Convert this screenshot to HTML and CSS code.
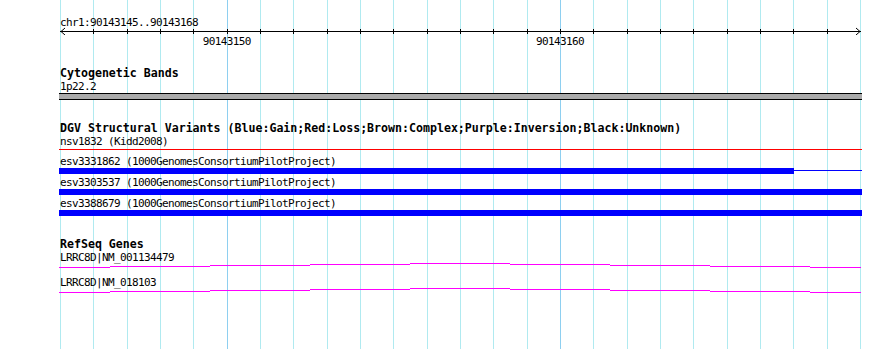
FILE: index.html
```html
<!DOCTYPE html>
<html>
<head>
  <title>Genome view</title>
  <link rel="stylesheet" href="styles.css">
</head>
<body>

  <div class="view">

    <!-- grid behind the tracks: one column per base -->
    <div class="grid">
      <div class="grid-col"></div><div class="grid-col"></div><div class="grid-col"></div>
      <div class="grid-col"></div><div class="grid-col"></div><div class="grid-col major"></div>
      <div class="grid-col"></div><div class="grid-col"></div><div class="grid-col"></div>
      <div class="grid-col"></div><div class="grid-col"></div><div class="grid-col"></div>
      <div class="grid-col"></div><div class="grid-col"></div><div class="grid-col"></div>
      <div class="grid-col major"></div><div class="grid-col"></div><div class="grid-col"></div>
      <div class="grid-col"></div><div class="grid-col"></div><div class="grid-col"></div>
      <div class="grid-col"></div><div class="grid-col"></div><div class="grid-col"></div>
    </div>

    <div class="tracks">

      <div class="label">chr1:90143145..90143168</div>
      <svg class="ruler" width="803" height="8" viewBox="0 0 803 8" shape-rendering="crispEdges">
        <line x1="1" y1="4.5" x2="802" y2="4.5" stroke="#000"/>
        <g id="ticks" stroke="#000"></g>
        <polyline points="6,1 2,4.5 6,8" fill="none" stroke="#000" shape-rendering="auto"/>
        <polyline points="797,1 801,4.5 797,8" fill="none" stroke="#000" shape-rendering="auto"/>
      </svg>
      <div class="tick-labels">
        <span class="tick-label" style="left: 167.67px">90143150</span>
        <span class="tick-label" style="left: 501px">90143160</span>
      </div>

      <div class="title section-gap">Cytogenetic Bands</div>
      <div class="label">1p22.2</div>
      <div class="band"></div>

      <div class="title section-gap-lg">DGV Structural Variants (Blue:Gain;Red:Loss;Brown:Complex;Purple:Inversion;Black:Unknown)</div>
      <div class="label">nsv1832 (Kidd2008)</div>
      <div class="rule-red"></div>

      <div class="feature first">
        <div class="label">esv3331862 (1000GenomesConsortiumPilotProject)</div>
        <div class="bar-wrap">
          <div class="bar" style="width: 735px"></div>
          <div class="bar-tail"></div>
        </div>
      </div>
      <div class="feature">
        <div class="label">esv3303537 (1000GenomesConsortiumPilotProject)</div>
        <div class="bar"></div>
      </div>
      <div class="feature">
        <div class="label">esv3388679 (1000GenomesConsortiumPilotProject)</div>
        <div class="bar"></div>
      </div>

      <div class="title section-gap-lg">RefSeq Genes</div>
      <div class="gene">
        <div class="label">LRRC8D|NM_001134479</div>
        <svg class="gene-line" width="803" height="5" viewBox="0 0 803 5"></svg>
      </div>
      <div class="gene second">
        <div class="label">LRRC8D|NM_018103</div>
        <svg class="gene-line" width="803" height="5" viewBox="0 0 803 5"></svg>
      </div>

    </div>
  </div>

  <script>
    // ruler ticks, one per base boundary
    const ticks = document.getElementById('ticks');
    for (let i = 1; i < 24; i++) {
      const x = Math.round(i * 800 / 24) + 1.5;
      const t = document.createElementNS('http://www.w3.org/2000/svg', 'line');
      t.setAttribute('x1', x);
      t.setAttribute('x2', x);
      t.setAttribute('y1', 2);
      t.setAttribute('y2', 7);
      ticks.appendChild(t);
    }

    // gene body drawn as stepped segments [start, end, row]
    const segments = [
      [59, 110, 4], [110, 210, 3], [210, 310, 2], [310, 410, 1], [410, 510, 0],
      [510, 610, 1], [610, 710, 2], [710, 810, 3], [810, 861, 4]
    ];
    document.querySelectorAll('.gene-line').forEach(svg => {
      segments.forEach(([x0, x1, row]) => {
        const r = document.createElementNS('http://www.w3.org/2000/svg', 'rect');
        r.setAttribute('x', x0 - 59);
        r.setAttribute('y', row);
        r.setAttribute('width', x1 - x0);
        r.setAttribute('height', 1);
        r.setAttribute('fill', '#ff00ff');
        svg.appendChild(r);
      });
    });
  </script>
</body>
</html>
```

FILE: styles.css
```css
html, body {
  margin: 0;
  background: #ffffff;
}

.view {
  position: relative;
  width: 890px;
  height: 349px;
  overflow: hidden;
}

/* vertical base grid */
.grid {
  position: absolute;
  top: 0;
  left: 60px;
  width: 800px;
  height: 100%;
  display: grid;
  grid-template-columns: repeat(24, 1fr);
  border-right: 1px solid #b0eaf0;
  z-index: 0;
}

.grid-col {
  box-sizing: border-box;
  border-left: 1px solid #b0eaf0;
}

.grid-col.major {
  border-left-color: #8ecff0;
}

.tracks {
  position: relative;
  z-index: 1;
  padding: 16px 0 0 59px;
  width: 803px;
}

/* small font: 6px per character, like the original bitmap font */
.label,
.tick-label {
  font-family: "DejaVu Sans Mono", monospace;
  font-size: 11px;
  letter-spacing: -0.62px;
  line-height: 13px;
  color: #000;
  white-space: nowrap;
}

.label {
  padding-left: 1px;
  height: 13px;
}

.title {
  padding-left: 1px;
  font-family: "DejaVu Sans Mono", monospace;
  font-weight: bold;
  font-size: 11.6px;
  line-height: 13px;
  height: 13px;
  color: #000;
  white-space: nowrap;
}

.section-gap { margin-top: 19px; }
.section-gap-lg { margin-top: 22px; }

.ruler {
  display: block;
  margin-top: -2px;
}

.tick-labels {
  position: relative;
  height: 13px;
}

.tick-label {
  position: absolute;
  top: 0;
  transform: translateX(-50%);
}

/* cytoband */
.band {
  height: 5px;
  background: #aaaaaa;
  border-top: 1px solid #000;
  border-bottom: 1px solid #000;
}

.rule-red {
  margin-top: 1px;
  height: 1px;
  background: #ff0000;
}

.feature { margin-top: 2px; }
.feature.first { margin-top: 5px; }

.bar {
  height: 6px;
  background: #0000ff;
}

.bar-wrap {
  display: flex;
  align-items: flex-start;
}

.bar-wrap .bar {
  flex: none;
}

.bar-tail {
  flex: 1;
  height: 1px;
  margin-top: 2px;
  background: #0000ff;
}

.gene-line {
  display: block;
  margin-top: -1px;
}

.gene.second { margin-top: 8px; }
```
